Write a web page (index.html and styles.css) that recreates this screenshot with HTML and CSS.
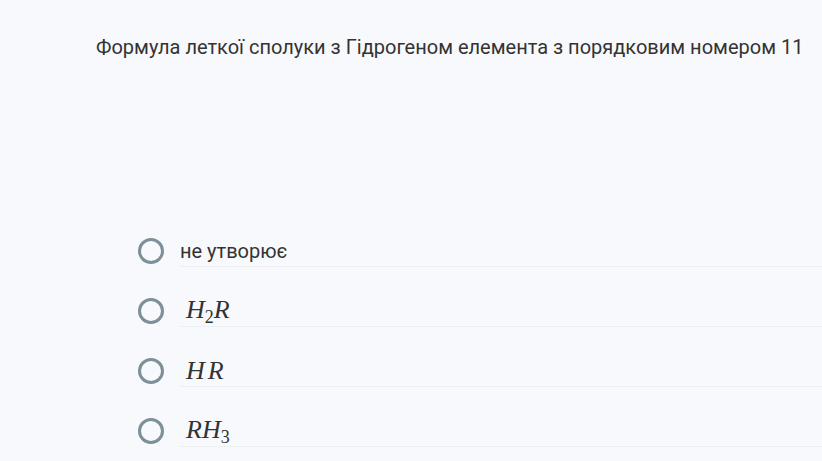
FILE: index.html
```html
<!DOCTYPE html>
<html lang="uk">
<head>
  <meta charset="UTF-8">
  <meta name="viewport" content="width=device-width, initial-scale=1.0">
  <title>Питання</title>
  <link rel="stylesheet" href="styles.css">
</head>
<body>
  <div class="pitannya">
    <p class="tekst-pitannya">Формула леткої сполуки з Гідрогеном елемента з порядковим номером 11</p>
  </div>
  <ul class="variantu">
    <li class="variant">
      <span class="radio"></span>
      <span class="tekst">не утворює</span>
    </li>
    <li class="variant">
      <span class="radio"></span>
      <span class="tekst"><span class="math">H<sub>2</sub>R</span></span>
    </li>
    <li class="variant">
      <span class="radio"></span>
      <span class="tekst"><span class="math">H<span class="prob"></span>R</span></span>
    </li>
    <li class="variant">
      <span class="radio"></span>
      <span class="tekst"><span class="math">RH<sub>3</sub></span></span>
    </li>
  </ul>
</body>
</html>
```

FILE: styles.css
```css
body {
  margin: 0;
  background-color: #f8f9fc;
  font-family: Roboto, "Liberation Sans", sans-serif;
  color: #333;
  overflow: hidden;
}
.pitannya {
  padding: 34px 0 0 96px;
  height: 187px;
}
.tekst-pitannya {
  margin: 0;
  font-size: 20px;
  line-height: 26px;
  white-space: nowrap;
}
.variantu {
  list-style: none;
  margin: 0;
  padding: 0 0 0 138px;
}
.variant {
  display: flex;
  align-items: center;
  height: 60px;
}
.radio {
  width: 20px;
  height: 20px;
  border: 3px solid #7d8f99;
  border-radius: 50%;
  flex-shrink: 0;
}
.tekst {
  flex: 1;
  margin-left: 16px;
  height: 30px;
  margin-top: 1px;
  display: flex;
  align-items: center;
  border-bottom: 1px solid #edeff3;
  font-size: 20px;
}
.math {
  font-family: "Liberation Serif", serif;
  font-style: italic;
  font-size: 26px;
  padding-left: 6px;
}
.math sub {
  font-style: normal;
  font-size: 18px;
  vertical-align: -5px;
}
.prob {
  display: inline-block;
  width: 3px;
}
```
